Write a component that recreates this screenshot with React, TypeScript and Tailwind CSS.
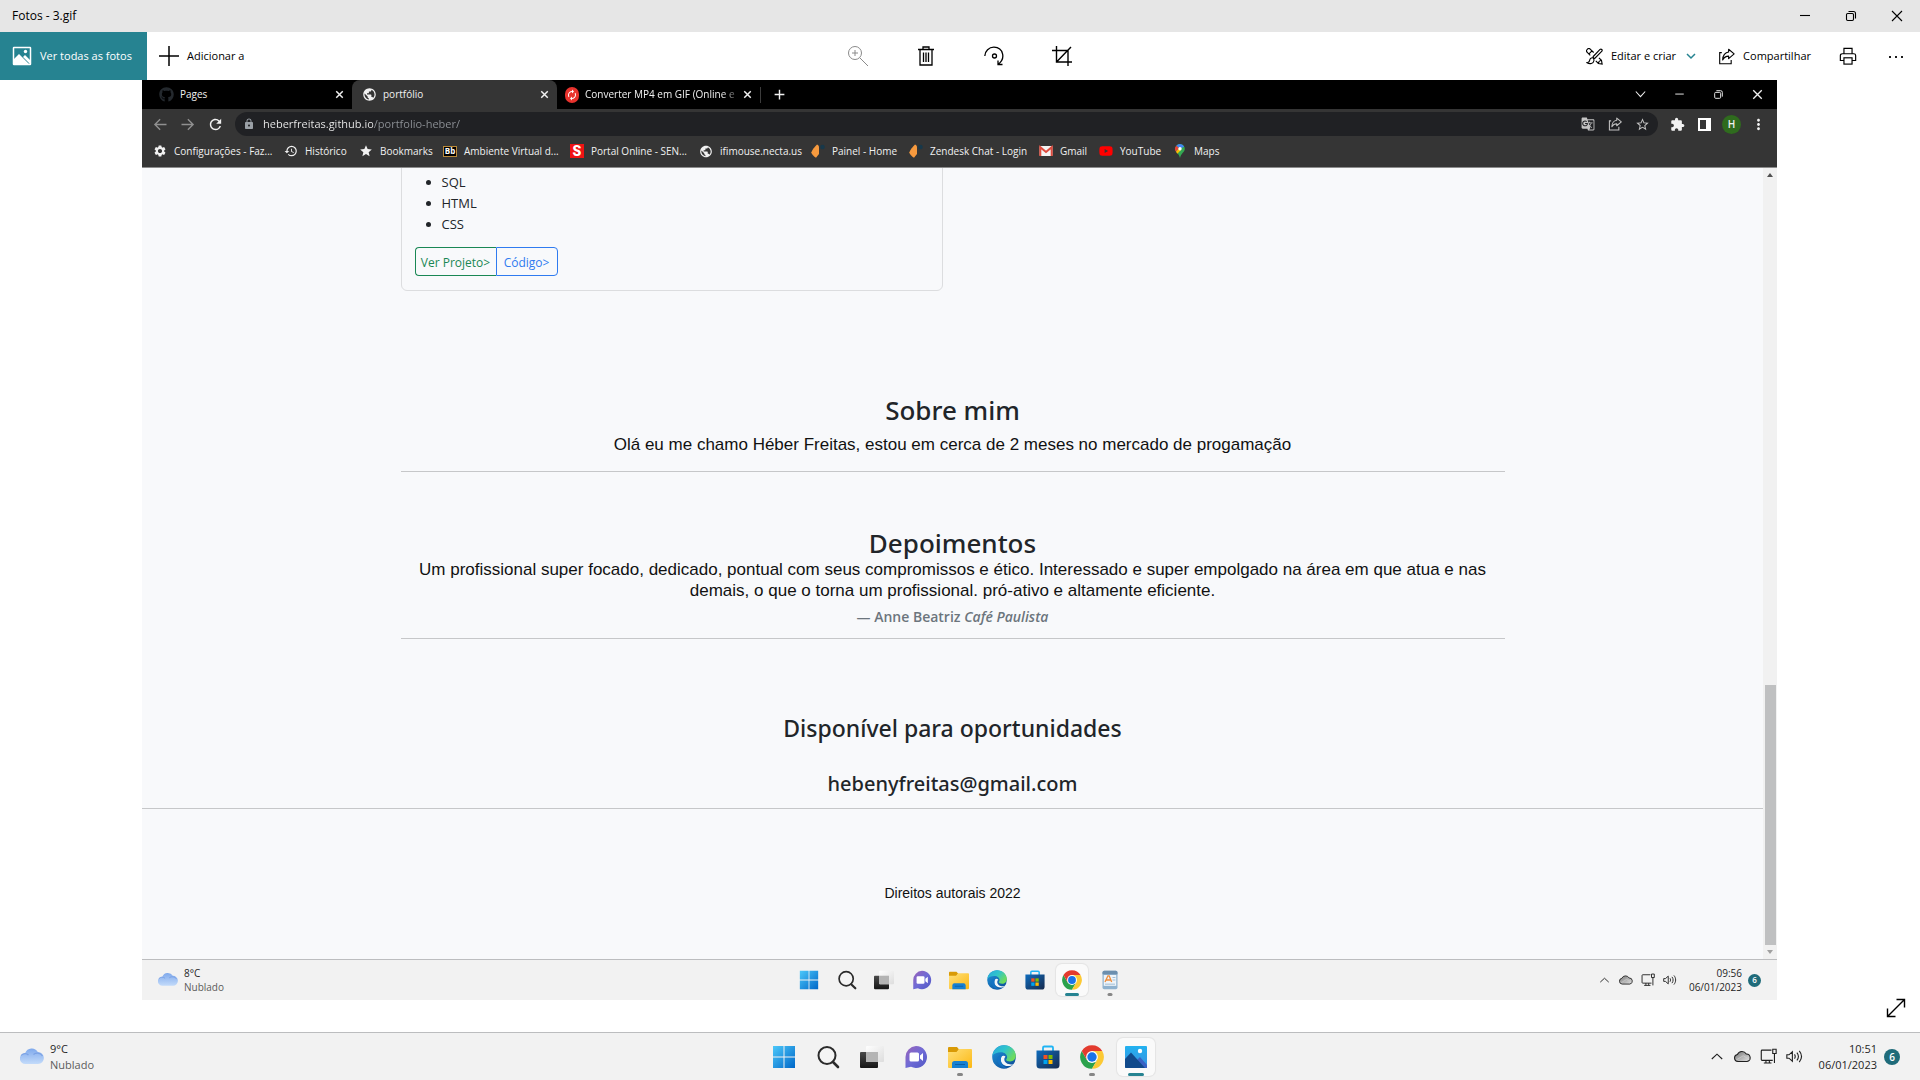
import { useState, type ReactNode } from "react";
import { FaGithub, FaYoutube } from "react-icons/fa";
import {
  MdAutorenew,
  MdExtension,
  MdGTranslate,
  MdHistory,
  MdLock,
  MdMoreVert,
  MdPublic,
  MdRefresh,
  MdSettings,
  MdStar,
  MdStarBorder,
} from "react-icons/md";

/* ---------- line icons ---------- */

function Line({ size, w = 1, children }: { size: number; w?: number; children: ReactNode }) {
  return (
    <svg width={size} height={size} viewBox="0 0 20 20" fill="none" stroke="currentColor" strokeWidth={w} aria-hidden="true">
      {children}
    </svg>
  );
}

const Minimize = ({ size }: { size: number }) => (
  <Line size={size} w={1.1}><path d="M5 9.5h10" /></Line>
);
const Restore = ({ size }: { size: number }) => (
  <Line size={size} w={1.1}>
    <rect x="5.5" y="7.5" width="7" height="7" rx="1.2" />
    <path d="M7.5 5.5h5a2 2 0 0 1 2 2v5" />
  </Line>
);
const Close = ({ size, w = 1.1 }: { size: number; w?: number }) => (
  <Line size={size} w={w}><path d="M5 5l10 10M15 5L5 15" /></Line>
);
const ShareIcon = ({ size, w = 1.1 }: { size: number; w?: number }) => (
  <Line size={size} w={w}>
    <path d="M4.500 5.500H2v13h13.500V14" />
    <path d="M12.500 1.500l6.500 5.500-6.500 5.500V9.500C9.500 9.500 7 11 5.500 14 5.500 9 8.500 5 12.500 4.700z" strokeLinejoin="round" />
  </Line>
);

/* ---------- taskbar icons (24 x 24 drawings) ---------- */

function Art({ size, children }: { size: number; children: ReactNode }) {
  return (
    <svg width={size} height={size} viewBox="0 0 24 24" aria-hidden="true">
      {children}
    </svg>
  );
}

const Defs = () => (
  <svg width="0" height="0" className="absolute" aria-hidden="true">
    <defs>
      <linearGradient id="win" x1="0" y1="0" x2="1" y2="1">
        <stop offset="0" stopColor="#4cc8fa" />
        <stop offset="1" stopColor="#0067c8" />
      </linearGradient>
      <linearGradient id="dark" x1="0" y1="0" x2="0" y2="1">
        <stop offset="0" stopColor="#4a4a4a" />
        <stop offset="1" stopColor="#161616" />
      </linearGradient>
      <linearGradient id="light" x1="0" y1="0" x2="1" y2="1">
        <stop offset="0" stopColor="#ffffff" />
        <stop offset="1" stopColor="#dcdcdc" />
      </linearGradient>
      <linearGradient id="chat" x1="0" y1="0" x2="1" y2="1">
        <stop offset="0" stopColor="#9b62b8" />
        <stop offset="0.5" stopColor="#6f6bd6" />
        <stop offset="1" stopColor="#5157c4" />
      </linearGradient>
      <linearGradient id="folder" x1="0" y1="0" x2="1" y2="1">
        <stop offset="0" stopColor="#ffe07a" />
        <stop offset="1" stopColor="#fcb813" />
      </linearGradient>
      <linearGradient id="edgeTop" x1="0" y1="0" x2="1" y2="0.6">
        <stop offset="0" stopColor="#2aa6dc" />
        <stop offset="0.5" stopColor="#2fc4cd" />
        <stop offset="1" stopColor="#6fdc5a" />
      </linearGradient>
      <linearGradient id="edgeLow" x1="0" y1="0" x2="0.8" y2="1">
        <stop offset="0" stopColor="#2097dd" />
        <stop offset="1" stopColor="#0e4f9a" />
      </linearGradient>
      <linearGradient id="store" x1="0" y1="0" x2="1" y2="1">
        <stop offset="0" stopColor="#0f6cbd" />
        <stop offset="1" stopColor="#16294c" />
      </linearGradient>
      <linearGradient id="cloud" x1="0" y1="0" x2="0" y2="1">
        <stop offset="0" stopColor="#7fa9ec" />
        <stop offset="1" stopColor="#c3dbfa" />
      </linearGradient>
      <linearGradient id="sky" x1="0" y1="0" x2="0" y2="1">
        <stop offset="0" stopColor="#22b2f0" />
        <stop offset="1" stopColor="#3c8fe0" />
      </linearGradient>
      <linearGradient id="drive" x1="0" y1="0" x2="1" y2="1">
        <stop offset="0" stopColor="#777777" />
        <stop offset="1" stopColor="#e4e4e4" />
      </linearGradient>
    </defs>
  </svg>
);

const Windows = ({ size }: { size: number }) => (
  <Art size={size}>
    <path d="M1 1h10.500v10.500H1zM12.500 1H23v10.500H12.500zM1 12.500h10.500V23H1zM12.500 12.500H23V23H12.500z" fill="url(#win)" />
  </Art>
);
const SearchGlyph = ({ size }: { size: number }) => (
  <Art size={size}>
    <g fill="none" stroke="#2b2b2b">
      <circle cx="11" cy="10.500" r="8.500" strokeWidth="2" fill="#f4f4f4" />
      <path d="M17 17l5 5" strokeWidth="2.600" strokeLinecap="round" />
    </g>
  </Art>
);
const TaskView = ({ size }: { size: number }) => (
  <Art size={size}>
    <rect x="0" y="7" width="18" height="16" rx="1" fill="url(#dark)" />
    <rect x="6" y="1" width="18" height="16" rx="1" fill="url(#light)" opacity="0.95" />
    <path d="M6 7h12v10H7a1 1 0 0 1-1-1z" fill="#b4b4b4" />
  </Art>
);
const Chat = ({ size }: { size: number }) => (
  <Art size={size}>
    <path d="M12 1a11 11 0 1 1-5 20.800L1.500 23V12A11 11 0 0 1 12 1z" fill="url(#chat)" />
    <rect x="5.500" y="7.500" width="9.500" height="9" rx="1.500" fill="#fff" />
    <path d="M16 10.500l3-2.500v8l-3-2.500z" fill="#fff" />
  </Art>
);
const Folder = ({ size }: { size: number }) => (
  <Art size={size}>
    <path d="M0 3a1 1 0 0 1 1-1h8l2 2.500-2 3H0z" fill="#d99a06" />
    <path d="M0 7h8.500L11 4h12a1 1 0 0 1 1 1v17a1 1 0 0 1-1 1H1a1 1 0 0 1-1-1z" fill="url(#folder)" />
    <path d="M4 23v-4.500A2.500 2.500 0 0 1 6.500 16h11a2.500 2.500 0 0 1 2.500 2.500V23z" fill="#1680d2" />
    <path d="M7 19.500h10" stroke="#0b5fa6" />
  </Art>
);
const Edge = ({ size }: { size: number }) => (
  <Art size={size}>
    <circle cx="12" cy="12" r="11.800" fill="url(#edgeLow)" />
    <path d="M.4 10.500C1.200 4.500 6 .2 12 .2c7 0 11.800 5 11.800 10.600 0 3.500-2.600 5.700-5.600 5.700-2.500 0-4-.8-4-1.700 0-.6.9-1.100.9-2.700C15.100 9.500 12.500 7.300 9 7.300c-4 0-7 1.700-8.600 3.200z" fill="url(#edgeTop)" />
    <path d="M9.500 11.500c-2.300 5.200 1.400 9.600 6.500 9.600 2.200 0 4-.7 5.600-1.900-4.600 1-9.300-.9-9.300-4.900 0-1.200.6-1.900 1.200-2.500a2.600 2.600 0 0 0-4-.3z" fill="#f3f6f8" />
    <path d="M9.300 11.800C7.600 17 10.500 22.200 15.500 23.300A12 12 0 0 1 5 15.500c0-3.500 2-5.500 6-5.700-.8.500-1.400 1.200-1.700 2z" fill="#1473c4" />
  </Art>
);
const Store = ({ size }: { size: number }) => (
  <Art size={size}>
    <path d="M7 6V2.800A1.300 1.300 0 0 1 8.300 1.500h7.400A1.300 1.300 0 0 1 17 2.800V6" fill="none" stroke="#20b4f4" strokeWidth="1.800" />
    <path d="M.5 5.500h23V20a3.500 3.500 0 0 1-3.500 3.500H4A3.500 3.500 0 0 1 .5 20z" fill="url(#store)" />
    <path d="M7.500 10h4v4h-4z" fill="#f25022" />
    <path d="M12.500 10h4v4h-4z" fill="#7fba00" />
    <path d="M7.500 15h4v4h-4z" fill="#00a4ef" />
    <path d="M12.500 15h4v4h-4z" fill="#ffb900" />
  </Art>
);
const Chrome = ({ size }: { size: number }) => (
  <Art size={size}>
    <path d="M1.780 6.100A11.800 11.800 0 0 0 12 23.800L17.110 14.950 12 12 6.890 14.950z" fill="#2ba24c" />
    <path d="M22.220 6.100A11.800 11.800 0 0 1 12 23.800L17.110 14.950 12 6.100z" fill="#fcc934" />
    <path d="M1.780 6.100A11.800 11.800 0 0 1 22.220 6.100H12v5L6.890 14.950z" fill="#e33b2e" />
    <circle cx="12" cy="12" r="5.900" fill="#fff" />
    <circle cx="12" cy="12" r="4.700" fill="#1a73e8" />
  </Art>
);
const Photos = ({ size }: { size: number }) => (
  <Art size={size}>
    <rect x="1" y="1" width="22" height="22" rx="1" fill="url(#sky)" />
    <path d="M12 16l4-4 7 8v3H12z" fill="#3a62c4" />
    <path d="M1 14l6-6.500L21 23H2a1 1 0 0 1-1-1z" fill="#114a8b" />
    <circle cx="16" cy="6" r="2.200" fill="#fff" />
  </Art>
);
const WordPad = ({ size }: { size: number }) => (
  <Art size={size}>
    <rect x="3" y="1" width="18" height="22" rx="2" fill="#8fb2cf" />
    <path d="M3 3a2 2 0 0 1 2-2h14a2 2 0 0 1 2 2v2H3z" fill="#6c8fae" />
    <path d="M4.500 6h15v13h-15z" fill="#eef4f9" />
    <path d="M6 14.500L9.500 7h1.500l3 7.500M7.500 12h5" fill="none" stroke="#ee8d3c" strokeWidth="1.600" />
    <path d="M15 9h3.500M15 12h3.500M6 17h12" stroke="#8fb2cf" />
  </Art>
);

const Weather = ({ size }: { size: number }) => (
  <Art size={size}>
    <path d="M5.500 19a5.500 5.500 0 0 1-.3-11 7 7 0 0 1 12.600-1A6 6 0 0 1 18 19z" fill="url(#cloud)" />
    <path d="M1 10.500a5 5 0 0 1 7.500-.5M13.500 9.500c2-2 7-2 9 1.500" stroke="#6f97e0" strokeWidth="1.200" fill="none" opacity="0.700" />
  </Art>
);

const ChevronUp = ({ size }: { size: number }) => (
  <Line size={size} w={1.400}><path d="M3.500 12.500L10 6.500l6.500 6" /></Line>
);
const OneDrive = ({ size }: { size: number }) => (
  <Art size={size}>
    <path d="M5.500 19a5 5 0 0 1-.7-9.900 7 7 0 0 1 12.500-.6A5.300 5.300 0 0 1 18.500 19z" fill="url(#drive)" stroke="#1f1f1f" strokeWidth="1.500" />
    <path d="M3 17l10-6 9 5" fill="none" stroke="#cfcfcf" strokeWidth="1" />
  </Art>
);
const Network = ({ size }: { size: number }) => (
  <Line size={size} w={1.300}>
    <path d="M13.500 2.500h-11a1 1 0 0 0-1 1v10a1 1 0 0 0 1 1H15M7 14.500v3M11 14.500v3M4.500 17.700h9M15 1.500h4v5h-4zM17 6.500v11.200" />
  </Line>
);
const Speaker = ({ size }: { size: number }) => (
  <Line size={size} w={1.300}>
    <path d="M1 8v4h2.500L7.500 15.500v-11L3.500 8zM10 7.500c1 1.500 1 3.500 0 5M12.800 5.500c2.200 2.700 2.200 6.300 0 9M15.600 3.500c3.300 4 3.300 9 0 13" />
  </Line>
);

/* ---------- Windows taskbar ---------- */

type Task = { name: string; art: (p: { size: number }) => ReactNode; state?: "open" | "active" };

const baseTasks: Task[] = [
  { name: "Iniciar", art: Windows },
  { name: "Pesquisar", art: SearchGlyph },
  { name: "Visão de tarefas", art: TaskView },
  { name: "Chat", art: Chat },
];

const innerTasks: Task[] = [
  ...baseTasks,
  { name: "Explorador de Arquivos", art: Folder },
  { name: "Microsoft Edge", art: Edge },
  { name: "Microsoft Store", art: Store },
  { name: "Google Chrome", art: Chrome, state: "active" },
  { name: "WordPad", art: WordPad, state: "open" },
];

const outerTasks: Task[] = [
  ...baseTasks,
  { name: "Explorador de Arquivos", art: Folder, state: "open" },
  { name: "Microsoft Edge", art: Edge },
  { name: "Microsoft Store", art: Store },
  { name: "Google Chrome", art: Chrome, state: "open" },
  { name: "Fotos", art: Photos, state: "active" },
];

function Taskbar({ small, temp, time, tasks }: { small?: boolean; temp: string; time: string; tasks: Task[] }) {
  const art = small ? 20 : 24;
  return (
    <footer
      className={`flex items-center border-t border-[#bcbdbf] bg-[#f2f2f2] font-['Open_Sans',sans-serif] text-[#1f1f1f] ${
        small ? "h-[41px] px-4 text-[10px] leading-[14px]" : "h-12 px-5 text-[11px] leading-4"
      }`}
    >
      <div className="flex flex-1 items-center">
        <button className="flex items-center gap-1.5 text-left">
          <Weather size={small ? 20 : 24} />
          <span>
            <span className="block">{temp}</span>
            <span className="block text-[#5c5c5c]">Nublado</span>
          </span>
        </button>
      </div>
      <nav className={`grid grid-cols-9 ${small ? "w-[338px]" : "w-[396px]"}`}>
        {tasks.map(({ name, art: Icon, state }) => (
          <button
            key={name}
            aria-label={name}
            className={`relative mx-auto flex items-center justify-center rounded-md ${
              small ? "h-8 w-8" : "h-[38px] w-[38px]"
            } ${state === "active" ? "bg-[#fafafa] shadow-[0_0_1px_1px_rgba(0,0,0,0.06)]" : ""}`}
          >
            <Icon size={art} />
            {state && (
              <span
                className={`absolute bottom-0 left-1/2 -translate-x-1/2 rounded-full ${
                  state === "active"
                    ? small ? "h-[3px] w-3.5 bg-[#268391]" : "h-[3px] w-4 bg-[#268391]"
                    : small ? "h-[3px] w-[5px] bg-[#868686]" : "h-[3px] w-1.5 bg-[#868686]"
                }`}
              />
            )}
          </button>
        ))}
      </nav>
      <div className="flex flex-1 items-center justify-end">
        <div className={`flex items-center ${small ? "gap-2 pr-3" : "gap-[9px] pr-4"}`}>
          <button aria-label="Mostrar ícones ocultos"><ChevronUp size={small ? 13 : 16} /></button>
          <button aria-label="OneDrive"><OneDrive size={small ? 14 : 17} /></button>
          <button aria-label="Rede"><Network size={small ? 14 : 17} /></button>
          <button aria-label="Volume"><Speaker size={small ? 14 : 17} /></button>
        </div>
        <time className="text-right">
          <span className="block">{time}</span>
          <span className="block">06/01/2023</span>
        </time>
        <span
          className={`flex items-center justify-center rounded-full bg-[#1f6b7a] font-semibold text-white ${
            small ? "ml-1.5 size-[13px] text-[8px]" : "ml-[7px] size-4 text-[10px]"
          }`}
        >
          6
        </span>
      </div>
    </footer>
  );
}

/* ---------- browser ---------- */

const ConverterIcon = () => (
  <span className="flex h-4 w-3.5 items-center justify-center rounded-full bg-[#e8322d]">
    <MdAutorenew size={12} className="text-white" />
  </span>
);

function Tab({ label, icon, active, width, fade }: { label: string; icon: ReactNode; active?: boolean; width: string; fade?: boolean }) {
  return (
    <div
      role="tab"
      aria-selected={!!active}
      className={`flex h-full items-center pr-1.5 ${width} ${active ? "rounded-t-lg bg-[#353535] pl-2.5" : "pl-2"}`}
    >
      {icon}
      <span
        className={`ml-1.5 min-w-0 flex-1 overflow-hidden whitespace-nowrap ${
          fade ? "[mask-image:linear-gradient(90deg,#000_88%,transparent_100%)]" : ""
        }`}
      >
        {label}
      </span>
      <button aria-label={`Fechar ${label}`}><Close size={13} w={2.200} /></button>
    </div>
  );
}

const Plug = () => (
  <svg width="14" height="14" viewBox="0 0 14 14" aria-hidden="true">
    <path d="M6 0.500C7.500 1 8 2 8 3.500v6.500L5 13.800C3 12.500.5 10 .3 8.500 1 6 4 2.500 6 .5z" fill="#f79a3e" />
    <circle cx="11.500" cy="3" r="2.300" fill="#17384a" />
  </svg>
);

const bookmarks: { label: string; width: string; icon: ReactNode }[] = [
  { label: "Configurações - Faz...", width: "w-[131px]", icon: <MdSettings size={14} /> },
  { label: "Histórico", width: "w-[75px]", icon: <MdHistory size={14} /> },
  { label: "Bookmarks", width: "w-[84px]", icon: <MdStar size={14} /> },
  {
    label: "Ambiente Virtual d...",
    width: "w-[127px]",
    icon: (
      <span className="flex h-[11px] w-3.5 items-center justify-center border border-[#b98a3a] bg-black text-[8px] leading-none font-bold text-white">
        Bb
      </span>
    ),
  },
  {
    label: "Portal Online - SEN...",
    width: "w-[129px]",
    icon: <span className="flex size-3.5 items-center justify-center bg-[#f01414] font-['Roboto',sans-serif] text-[14px] leading-none font-black text-white">S</span>,
  },
  { label: "ifimouse.necta.us", width: "w-[112px]", icon: <MdPublic size={15} /> },
  { label: "Painel - Home", width: "w-[98px]", icon: <Plug /> },
  { label: "Zendesk Chat - Login", width: "w-[130px]", icon: <Plug /> },
  {
    label: "Gmail",
    width: "w-[60px]",
    icon: (
      <svg width="14" height="12" viewBox="0 0 14 12" aria-hidden="true">
        <rect x="0.500" y="1" width="13" height="10" rx="1" fill="#f3f3f3" />
        <path d="M1.300 11V2.200L7 7l5.700-4.800V11" fill="none" stroke="#dd4b3e" strokeWidth="2" />
      </svg>
    ),
  },
  { label: "YouTube", width: "w-[74px]", icon: <FaYoutube size={14} className="text-[#f00]" /> },
  {
    label: "Maps",
    width: "w-[60px]",
    icon: (
      <svg width="14" height="14" viewBox="0 0 14 14" aria-hidden="true">
        <path d="M7 0a4.800 4.800 0 0 1 4.800 4.800C11.800 8 8 9.500 7 14 6 9.500 2.200 8 2.200 4.800A4.800 4.800 0 0 1 7 0z" fill="#34a853" />
        <path d="M7 0a4.800 4.800 0 0 1 4.200 2.500L7 4.800 3.300 1.700A4.800 4.800 0 0 1 7 0z" fill="#4285f4" />
        <path d="M3.300 1.700L6 4 3 7.800a4.800 4.800 0 0 1 .3-6.100z" fill="#ea4335" />
        <path d="M8 6L4.300 9.700 3 7.800l3-3.500z" fill="#fbbc04" />
        <circle cx="7" cy="4.800" r="1.700" fill="#fff" />
      </svg>
    ),
  },
];

function BrowserChrome() {
  const [url, setUrl] = useState("heberfreitas.github.io/portfolio-heber/");
  return (
    <header className="font-['Open_Sans',sans-serif] text-[10px] text-[#f1f1f1]">
      <div className="flex h-[29px] items-center bg-black">
        <div role="tablist" className="flex h-full items-center pl-[9px]">
          <Tab label="Pages" width="w-[201px]" icon={<FaGithub size={15} className="text-[#24292e]" />} />
          <Tab label="portfólio" width="w-[205px]" active icon={<MdPublic size={15} />} />
          <Tab label="Converter MP4 em GIF (Online e" width="w-[203px]" fade icon={<ConverterIcon />} />
          <span className="h-4 w-px bg-[#3c3c3c]" />
        </div>
        <button aria-label="Nova guia" className="ml-3">
          <Line size={13} w={2.200}><path d="M10 2.500v15M2.500 10h15" /></Line>
        </button>
        <div className="ml-auto flex items-center gap-[22px] pr-[11px]">
          <button aria-label="Pesquisar guias"><Line size={17} w={1.200}><path d="M4.500 6.500l5.500 6 5.500-6" /></Line></button>
          <button aria-label="Minimizar navegador"><Minimize size={17} /></button>
          <button aria-label="Restaurar navegador"><Restore size={17} /></button>
          <button aria-label="Fechar navegador"><Close size={17} w={1.600} /></button>
        </div>
      </div>
      <div className="flex h-[30px] items-center bg-[#353535] pr-[5px] pl-[11px]">
        <button aria-label="Voltar" className="mr-3 text-[#909090]">
          <Line size={15} w={1.800}><path d="M18 10H3M9.500 3L2.500 10l7 7" /></Line>
        </button>
        <button aria-label="Avançar" className="mr-3 text-[#909090]">
          <Line size={15} w={1.800}><path d="M2 10h15M10.500 3l7 7-7 7" /></Line>
        </button>
        <button aria-label="Recarregar" className="mr-[11px]"><MdRefresh size={17} /></button>
        <div className="flex h-6 flex-1 items-center rounded-full bg-[#202124] pr-2 pl-2">
          <MdLock size={12} className="text-[#9aa0a6]" />
          <input
            aria-label="Endereço"
            value={url}
            onChange={(e) => setUrl(e.target.value)}
            className="ml-2 min-w-0 flex-1 bg-transparent bg-[linear-gradient(90deg,#f1f1f1_110px,#8f9398_110px)] bg-clip-text text-[11px] text-transparent caret-white outline-none"
          />
          <div className="flex items-center gap-[13px] text-[#c4c4c4]">
            <button aria-label="Traduzir"><MdGTranslate size={14} /></button>
            <button aria-label="Compartilhar página"><ShareIcon size={14} w={1.500} /></button>
            <button aria-label="Favoritar"><MdStarBorder size={15} /></button>
          </div>
        </div>
        <div className="ml-1.5 flex items-center">
          <button aria-label="Extensões" className="flex w-[27px] justify-center"><MdExtension size={15} /></button>
          <button aria-label="Painel lateral" className="flex w-[27px] justify-center">
            <svg width="13" height="13" viewBox="0 0 13 13" aria-hidden="true">
              <path d="M1 1h11v11H1z" fill="none" stroke="#fff" strokeWidth="2" />
              <path d="M8 1h4v11H8z" fill="#fff" />
            </svg>
          </button>
          <button aria-label="Perfil" className="mx-1 flex size-[19px] items-center justify-center rounded-full bg-[#2f6b1e] text-[10px] font-semibold">H</button>
          <button aria-label="Menu" className="flex w-[27px] justify-center"><MdMoreVert size={17} /></button>
        </div>
      </div>
      <nav className="flex h-[29px] items-center border-b border-[#8c8c8c] bg-[#353535] pb-1 pl-[11px]">
        {bookmarks.map((b) => (
          <a key={b.label} href="#" className={`flex items-center gap-[7px] whitespace-nowrap ${b.width}`}>
            <span className="flex w-3.5 shrink-0 justify-center">{b.icon}</span>
            {b.label}
          </a>
        ))}
      </nav>
    </header>
  );
}

function PortfolioPage() {
  return (
    <main className="flex min-w-0 flex-1 flex-col justify-end overflow-hidden bg-[#f8f9fb] font-['Open_Sans',sans-serif] text-[#212529]">
      <div className="mx-auto w-full max-w-[1104px] text-center">
        <article className="w-[542px] rounded-md border border-[#dcdddf] px-[13px] py-3.5 text-left text-[13px] leading-[21px]">
          <ul className="mb-3 list-disc pl-[27px]">
            <li>SQL</li>
            <li>HTML</li>
            <li>CSS</li>
          </ul>
          <div className="flex text-[12px]">
            <a href="#" className="flex h-[29px] w-[81px] items-center justify-center rounded-l border border-r-0 border-[#198754] pt-0.5 text-[#198754]">Ver Projeto&gt;</a>
            <a href="#" className="flex h-[29px] w-[62px] items-center justify-center rounded-r border border-[#2f7bf0] pt-0.5 text-[#2f7bf0]">Código&gt;</a>
          </div>
        </article>

        <h2 className="mt-[103px] font-['Noto_Sans',sans-serif] text-[26px] leading-8 font-medium">Sobre mim</h2>
        <p className="mt-2 font-['Liberation_Sans',sans-serif] text-[17px] leading-[21px] text-[#111]">
          Olá eu me chamo Héber Freitas, estou em cerca de 2 meses no mercado de progamação
        </p>
        <hr className="mt-4 border-[#c6c7c9]" />

        <h2 className="mt-[55px] font-['Noto_Sans',sans-serif] text-[26px] leading-8 font-medium">Depoimentos</h2>
        <blockquote className="font-['Liberation_Sans',sans-serif] text-[17px] leading-[21px] text-[#111]">
          Um profissional super focado, dedicado, pontual com seus compromissos e ético. Interessado e super empolgado na área em que atua e nas
          demais, o que o torna um profissional. pró-ativo e altamente eficiente.
        </blockquote>
        <p className="mt-1.5 text-[14px] leading-5 font-semibold text-[#6c757d]">
          — Anne Beatriz <cite>Café Paulista</cite>
        </p>
        <hr className="mt-[11px] border-[#c6c7c9]" />

        <h3 className="mt-[75px] font-['Noto_Sans',sans-serif] text-[23px] leading-7 font-medium">Disponível para oportunidades</h3>
        <h4 className="mt-[30px] font-['Noto_Sans',sans-serif] text-[20px] leading-6 font-medium">hebenyfreitas@gmail.com</h4>
      </div>
      <hr className="mt-3 border-[#c6c7c9]" />
      <p className="mt-[74px] pb-[55px] text-center font-['Liberation_Sans',sans-serif] text-[14px] leading-[21px] text-[#111]">
        Direitos autorais 2022
      </p>
    </main>
  );
}

function Scrollbar() {
  return (
    <div aria-hidden="true" className="flex w-3.5 flex-col items-center bg-[#f1f1f1]">
      <svg width="14" height="14" viewBox="0 0 14 14"><path d="M4 9l3-4 3 4z" fill="#505050" /></svg>
      <div className="flex w-[11px] flex-1 flex-col justify-end">
        <div className="h-[260px] bg-[#bfc0c1]" />
      </div>
      <svg width="14" height="14" viewBox="0 0 14 14"><path d="M4 5l3 4 3-4z" fill="#a0a0a0" /></svg>
    </div>
  );
}

/* ---------- photo viewer ---------- */

export default function App() {
  return (
    <div className="flex min-h-screen flex-col bg-white font-['Open_Sans',sans-serif] text-[12px] text-black">
      <Defs />
      <header className="flex h-8 items-center bg-[#e6e6e6] pr-[13px] pl-3">
        <h1 className="flex-1">Fotos - 3.gif</h1>
        <div className="flex gap-[26px]">
          <button aria-label="Minimizar"><Minimize size={20} /></button>
          <button aria-label="Restaurar"><Restore size={20} /></button>
          <button aria-label="Fechar"><Close size={20} /></button>
        </div>
      </header>

      <div className="flex h-12 items-center text-[11px]">
        <div className="flex h-full flex-1 items-center">
          <button className="flex h-full w-[147px] items-center gap-2 bg-[#268391] pl-3 whitespace-nowrap text-white">
            <svg width="20" height="20" viewBox="0 0 20 20" aria-hidden="true">
              <rect x="1.500" y="1.500" width="17" height="17" rx="0.500" fill="none" stroke="#fff" strokeWidth="1.500" />
              <path d="M2 13l5-5 10 10H2z" fill="#fff" />
              <path d="M11 11l2-2 5 5v4z" fill="#fff" />
              <circle cx="13.500" cy="5.500" r="1.700" fill="#fff" />
            </svg>
            Ver todas as fotos
          </button>
          <button className="ml-3 flex items-center gap-2">
            <Line size={20} w={1.500}><path d="M10 0v20M0 10h20" /></Line>
            Adicionar a
          </button>
        </div>
        <div className="flex items-center gap-12">
          <button aria-label="Ampliar" className="text-[#8a8a8a]">
            <Line size={20}><circle cx="7" cy="7" r="6.500" /><path d="M11.800 11.800L20 20M7 4v6M4 7h6" /></Line>
          </button>
          <button aria-label="Excluir">
            <Line size={20} w={1.300}><path d="M2 3.500h16M7 3.500V1h6v2.500M4 3.500V19h12V3.500M7.500 6.500v9.500M10 6.500v9.500M12.500 6.500v9.500" /></Line>
          </button>
          <button aria-label="Girar">
            <Line size={20} w={1.300}><path d="M.8 10A9 9 0 0 1 10 1.200c9.500.5 12 11.500 4 17M14 14.500v4h4.500" /><circle cx="10.500" cy="10" r="2" /></Line>
          </button>
          <button aria-label="Cortar">
            <Line size={20} w={1.400}><path d="M4.500 0v16H20M0 4.500h16V20M4.500 16L19 1" /></Line>
          </button>
        </div>
        <div className="flex flex-1 items-center justify-end">
          <button className="flex items-center gap-2">
            <Line size={17} w={1.300}>
              <path d="M1.500 5.200a2.600 2.600 0 0 1 3.700-3.700L9 5.300M1.500 5.200L5 8.700M3.500 7l3.500-3.500" />
              <path d="M11.500 15.200l3 3 4.500.8-.8-4.500-3-3M14.500 18.200c.3-2 1.700-3.400 3.700-3.700" />
              <path d="M8.500 10L16.500 1.600c1.500-1 3.200.7 2.200 2.200L10.500 12c-1 .6-2.600-1-2-2z" />
              <path d="M8 11.500c-2-.3-3.500 1-3.700 3-.2 1.700-1.300 2.500-3 2.800 3 2 7.500 1.200 8-2.300.2-1.300-.3-2.500-.8-3z" />
            </Line>
            Editar e criar
            <span className="ml-0.5 text-[#268391]"><Line size={10} w={3}><path d="M2 6l8 8 8-8" /></Line></span>
          </button>
          <button className="ml-[22px] flex items-center gap-2">
            <ShareIcon size={17} w={1.300} />
            Compartilhar
          </button>
          <button aria-label="Imprimir" className="ml-7">
            <Line size={18} w={1.300}>
              <path d="M5.500 7V1.500h9V7M5.500 15H1.500V9.500a2 2 0 0 1 2-2h13a2 2 0 0 1 2 2V15h-4" />
              <rect x="5.500" y="12" width="9" height="7" />
            </Line>
          </button>
          <button aria-label="Mais" className="mr-4 ml-[31px]">
            <svg width="16" height="16" viewBox="0 0 16 16" aria-hidden="true">
              <path d="M1 8h2v2H1zM7 8h2v2H7zM13 8h2v2h-2z" fill="#1a1a1a" />
            </svg>
          </button>
        </div>
      </div>

      <div className="flex flex-1 items-stretch">
        <div className="w-[142px] shrink-0" />
        <div className="mb-8 flex min-w-0 flex-1 flex-col">
          <BrowserChrome />
          <div className="flex min-h-[791px] flex-1">
            <div className="flex h-[791px] min-w-0 flex-1"><PortfolioPage /></div>
            <Scrollbar />
          </div>
          <Taskbar small temp="8°C" time="09:56" tasks={innerTasks} />
        </div>
        <div className="flex w-[143px] shrink-0 items-end justify-end pr-[14px] pb-[14px]">
          <button aria-label="Tela cheia">
            <Line size={20} w={1.400}><path d="M1.500 18.500l17-17M10.500 1.500h8v8M1.500 10.500v8h8" /></Line>
          </button>
        </div>
      </div>

      <Taskbar temp="9°C" time="10:51" tasks={outerTasks} />
    </div>
  );
}
